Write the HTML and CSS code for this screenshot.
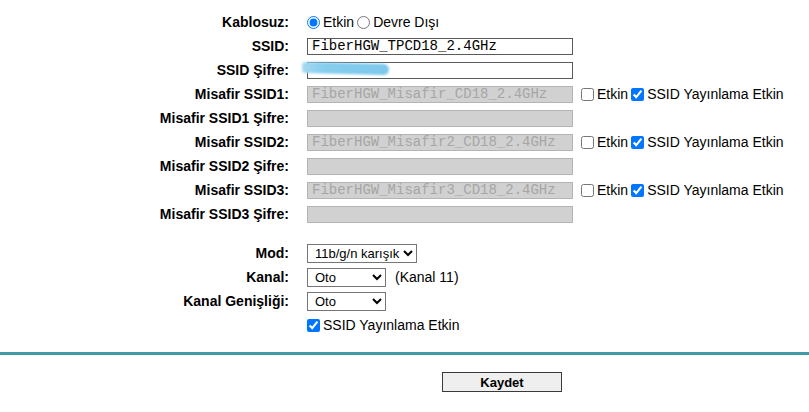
FILE: index.html
```html
<!DOCTYPE html>
<html lang="tr">
<head>
<meta charset="utf-8">
<title>Kablosuz Ayarları</title>
<link rel="stylesheet" href="styles.css">
</head>
<body>
<form class="settings">
  <div class="label">Kablosuz:</div>
  <div class="field">
    <label class="opt"><input type="radio" name="wl" checked>Etkin</label>
    <label class="opt"><input type="radio" name="wl">Devre Dışı</label>
  </div>

  <div class="label">SSID:</div>
  <div class="field"><input class="txt" type="text" value="FiberHGW_TPCD18_2.4GHz"></div>

  <div class="label">SSID Şifre:</div>
  <div class="field pw">
    <input class="txt" type="text" value="">
    <span class="scribble"></span>
  </div>

  <div class="label">Misafir SSID1:</div>
  <div class="field">
    <input class="txt" type="text" value="FiberHGW_Misafir_CD18_2.4GHz" disabled>
    <label class="opt"><input type="checkbox">Etkin</label>
    <label class="opt"><input type="checkbox" checked>SSID Yayınlama Etkin</label>
  </div>

  <div class="label">Misafir SSID1 Şifre:</div>
  <div class="field"><input class="txt" type="text" value="" disabled></div>

  <div class="label">Misafir SSID2:</div>
  <div class="field">
    <input class="txt" type="text" value="FiberHGW_Misafir2_CD18_2.4GHz" disabled>
    <label class="opt"><input type="checkbox">Etkin</label>
    <label class="opt"><input type="checkbox" checked>SSID Yayınlama Etkin</label>
  </div>

  <div class="label">Misafir SSID2 Şifre:</div>
  <div class="field"><input class="txt" type="text" value="" disabled></div>

  <div class="label">Misafir SSID3:</div>
  <div class="field">
    <input class="txt" type="text" value="FiberHGW_Misafir3_CD18_2.4GHz" disabled>
    <label class="opt"><input type="checkbox">Etkin</label>
    <label class="opt"><input type="checkbox" checked>SSID Yayınlama Etkin</label>
  </div>

  <div class="label">Misafir SSID3 Şifre:</div>
  <div class="field"><input class="txt" type="text" value="" disabled></div>

  <div class="spacer"></div>

  <div class="label">Mod:</div>
  <div class="field">
    <select class="sel mode"><option>11b/g/n karışık</option></select>
  </div>

  <div class="label">Kanal:</div>
  <div class="field">
    <select class="sel short"><option>Oto</option></select>
    <span class="note">(Kanal 11)</span>
  </div>

  <div class="label">Kanal Genişliği:</div>
  <div class="field">
    <select class="sel short"><option>Oto</option></select>
  </div>

  <div class="label"></div>
  <div class="field">
    <label class="opt"><input type="checkbox" checked>SSID Yayınlama Etkin</label>
  </div>
</form>

<hr class="divider">

<div class="actions">
  <button type="button" class="save">Kaydet</button>
</div>
</body>
</html>
```

FILE: styles.css
```css
html, body {
  margin: 0;
  padding: 0;
  background: #ffffff;
}

body {
  font-family: "Liberation Sans", Arial, sans-serif;
  font-size: 14px;
  color: #000;
}

.settings {
  display: grid;
  grid-template-columns: 289px 1fr;
  grid-template-rows: repeat(9, 24px) 15px repeat(4, 24px);
  column-gap: 18px;
  padding-top: 10px;
  align-items: center;
}

.label {
  text-align: right;
  font-weight: bold;
  font-size: 14px;
  white-space: nowrap;
}

.field {
  display: flex;
  align-items: center;
  white-space: nowrap;
}

.pw {
  position: relative;
}

.spacer {
  grid-column: 1 / -1;
  height: 15px;
}

.opt {
  display: inline-flex;
  align-items: center;
  font-size: 14px;
}

.opt input {
  margin: 0 3px 0 0;
  width: 13px;
  height: 13px;
  accent-color: #0075ff;
}

.field .opt + .opt {
  margin-left: 3px;
}

.txt {
  box-sizing: border-box;
  width: 266px;
  height: 17px;
  margin: 0;
  padding: 0 4px;
  border: 1px solid #5a5a5a;
  background: #fff;
  font-family: "Liberation Mono", "Courier New", monospace;
  font-size: 14px;
  line-height: 15px;
  color: #000;
  outline: none;
}

.txt:disabled {
  background: #d1d1d1;
  border-color: #b4b4b4;
  color: #a6a6a6;
}

.field .txt + .opt {
  margin-left: 8px;
}

.scribble {
  position: absolute;
  left: -5px;
  top: 1px;
  width: 87px;
  height: 11px;
  border-radius: 5px 9px 9px 5px;
  background: linear-gradient(90deg, #a6daf2 0%, #86cdee 25%, #7cc8ec 100%);
  filter: blur(1.3px);
  transform: rotate(1.5deg);
}

.sel {
  box-sizing: border-box;
  height: 19px;
  margin: 0;
  padding: 0 0 0 3px;
  border: 1px solid #767676;
  border-radius: 0;
  background: #fff;
  font-family: "Liberation Sans", Arial, sans-serif;
  font-size: 13px;
  color: #000;
}

.mode {
  width: 110px;
}

.short {
  width: 79px;
}

.note {
  margin-left: 9px;
  font-size: 14px;
}

.divider {
  margin: 15px 0 0;
  border: 0;
  height: 3px;
  background: #3f9ba8;
}

.actions {
  padding: 17px 0 0 442px;
}

.save {
  box-sizing: border-box;
  width: 120px;
  height: 20px;
  margin: 0;
  padding: 0;
  border: 1px solid #3a3a3a;
  border-radius: 0;
  background: #efefef;
  font-family: "Liberation Sans", Arial, sans-serif;
  font-weight: bold;
  font-size: 13px;
  color: #000;
}
```
